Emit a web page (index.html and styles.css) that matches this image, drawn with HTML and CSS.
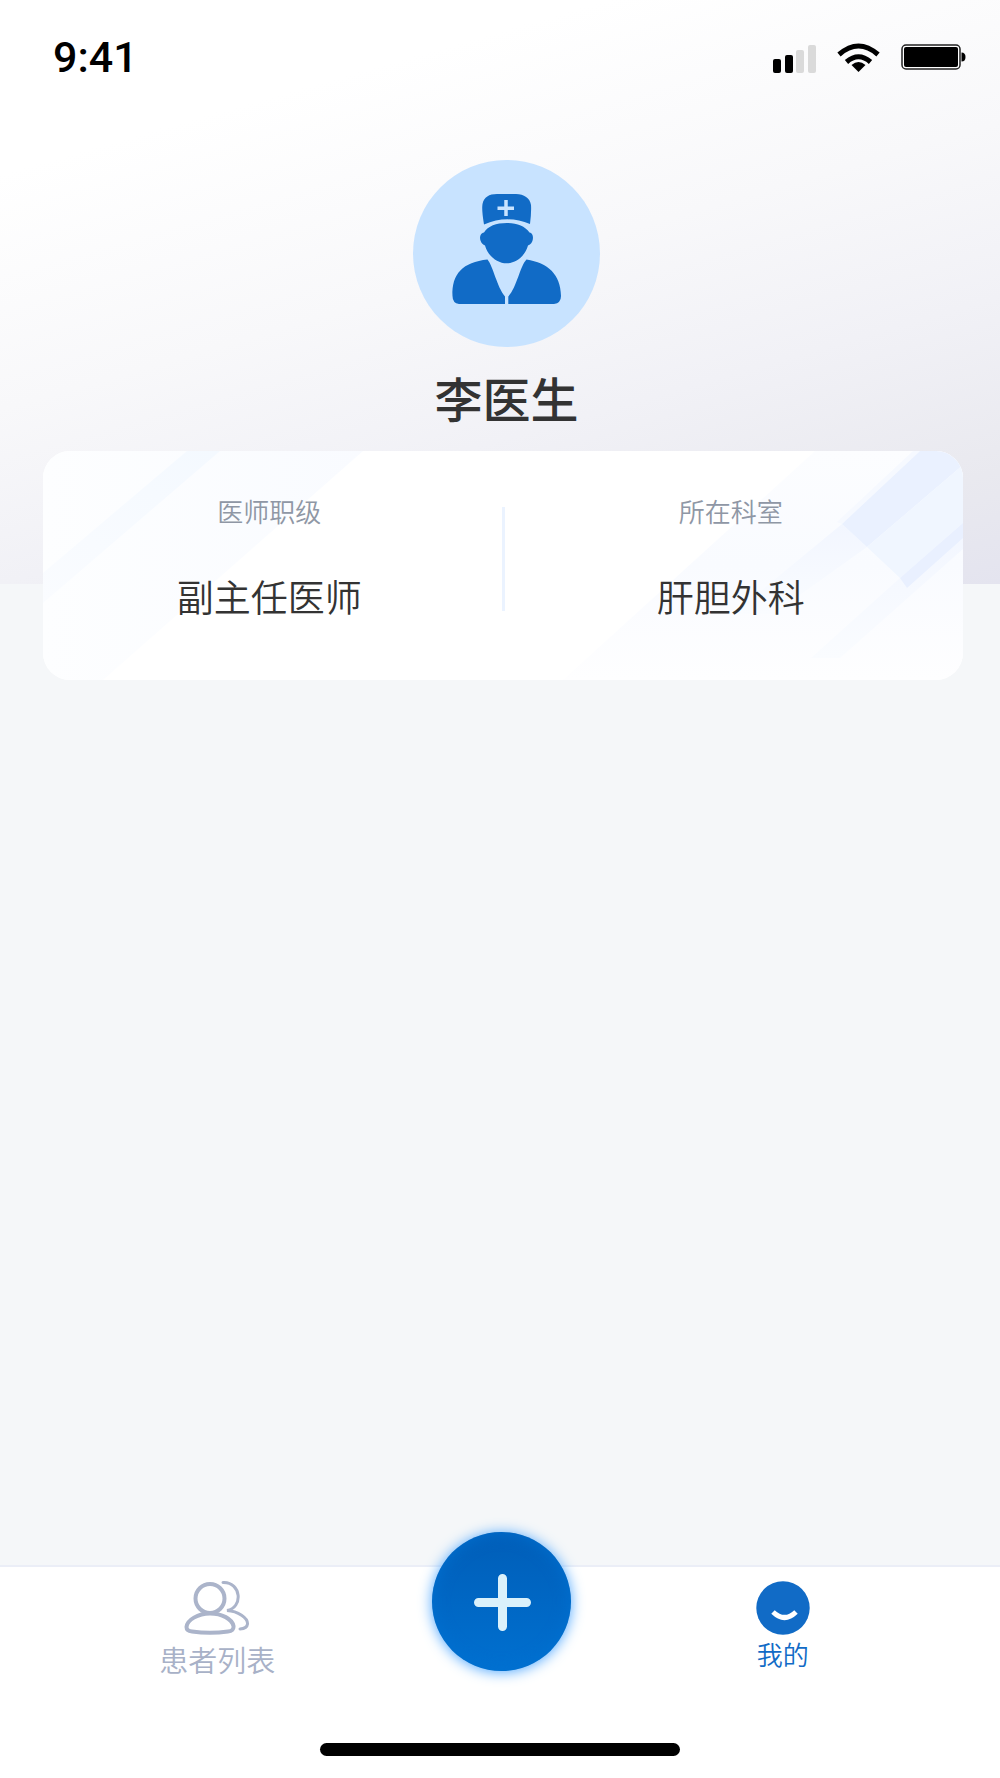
FILE: index.html
```html
<!DOCTYPE html>
<html lang="zh-CN">
  <head>
    <meta charset="utf-8" />
    <meta name="viewport" content="width=device-width, initial-scale=1" />
    <title>我的</title>
    <link rel="stylesheet" href="styles.css">
  </head>
  <body>
    <header class="status-bar">
      <span class="time">9:41</span>
      <div class="status-icons">
        <svg width="44" height="32" viewBox="0 0 44 32">
          <rect x="0" y="16" width="8" height="14" rx="2" />
          <rect x="12" y="12" width="8" height="18" rx="2" />
          <rect x="23" y="7" width="8" height="23" rx="2" fill="#dadada" />
          <rect x="35" y="2" width="8" height="28" rx="2" fill="#dadada" />
        </svg>
        <svg width="44" height="32" viewBox="0 0 44 32">
          <path d="M2 11.500 Q21.500 -5.500 41 11.500" fill="none" stroke="#000" stroke-width="5" />
          <path d="M9.500 19 Q21.500 8.500 33.500 19" fill="none" stroke="#000" stroke-width="5" />
          <path d="M14.500 22 Q21.500 16 28.500 22 L21.500 29Z" />
        </svg>
        <svg width="65" height="32" viewBox="0 0 65 32">
          <rect x="1" y="2" width="58" height="24" rx="4" fill="#fff" stroke="#222" stroke-width="1.500" />
          <rect x="3" y="4" width="54" height="20" rx="2" />
          <path d="M60.500 9.500 Q64.500 9.500 64.500 14 Q64.500 18.500 60.500 18.500Z" />
        </svg>
      </div>
    </header>
    <main>
      <section class="profile">
        <svg class="avatar" viewBox="0 0 187 187">
          <circle cx="93.500" cy="93.500" r="93.500" fill="#c8e3ff" />
          <g fill="#116bc6">
            <path d="M71 64.500 Q68.500 50 69.500 44 C71 37 76 34 84 34 H103 C111 34 117 38 118 45 Q118.500 52 117 64 Q94 54.500 71 64.500Z" />
            <path d="M94 63 C83 63 75 66 71 72.500 C67 73 66.500 78 67.500 80.500 C68.500 83.500 70 84.500 72 85.500 C75 96 84 103.300 93.700 103.300 C103 103.300 112 96 115 85.500 C118 84.500 119 82.500 119.700 80 C120.500 76 119.500 73 116.500 72.500 C112 66 104 63 94 63Z" />
            <path d="M74.500 99.500 C80 106 84 127 92 136.500 V144 H46 Q39.500 143 39.500 136 C38.500 114 50 102 74.500 99.500Z" />
            <path d="M113.500 99.500 C107 106 104 127 95.300 136.500 V144 H141 Q148 143 148 136 C147.500 114 135 103 113.500 99.500Z" />
          </g>
          <path d="M93 40 V56 M84.500 48.200 H101" stroke="#c8e3ff" stroke-width="3.500" />
        </svg>
        <h1>李医生</h1>
      </section>
      <section class="card">
        <svg class="card-pattern" viewBox="0 0 920 229" preserveAspectRatio="none">
          <defs>
            <linearGradient id="left" x1="0" y1="0" x2="1" y2="0">
              <stop offset="0" stop-color="#fdfeff" />
              <stop offset="1" stop-color="#f9fbff" />
            </linearGradient>
            <linearGradient id="stripe" x1="0" y1="1" x2="1" y2="0">
              <stop offset="0" stop-color="#fafcff" />
              <stop offset="1" stop-color="#f4f9ff" />
            </linearGradient>
            <linearGradient id="right" x1="0" y1="0" x2="0" y2="1">
              <stop offset="0" stop-color="#fcfdff" />
              <stop offset="0.500" stop-color="#f9fbff" />
              <stop offset="1" stop-color="#fefeff" />
            </linearGradient>
            <linearGradient id="fade" x1="0" y1="0" x2="0" y2="1">
              <stop offset="0" stop-color="#f2f6ff" />
              <stop offset="1" stop-color="#fafcff" />
            </linearGradient>
          </defs>
          <path d="M0 0 H320 L60 229 H0Z" fill="url(#left)" />
          <path d="M144 0 H177 L0 152 V122Z" fill="url(#stripe)" />
          <path d="M772 0 H920 V229 H520Z" fill="url(#right)" />
          <path d="M799 73 L824 96 L730 163 L690 163Z" fill="url(#fade)" />
          <path d="M857 127 L920 72 V98 L797 207 L768 207Z" fill="url(#fade)" />
          <path d="M870 0 H877 L799 73 L794 71Z" fill="#f6f9ff" />
          <path d="M877 0 H920 V14 L824 96 L799 73Z" fill="#eaf1ff" />
          <path d="M920 14 V72 L857 127 L824 96Z" fill="#f0f6ff" />
          <path d="M920 72 V87 L864 137 L857 127Z" fill="#e9f0ff" />
        </svg>
        <dl class="info">
          <dt>医师职级</dt>
          <dd>副主任医师</dd>
        </dl>
        <div class="divider"></div>
        <dl class="info">
          <dt>所在科室</dt>
          <dd>肝胆外科</dd>
        </dl>
      </section>
    </main>
    <footer>
      <nav class="tabs">
        <a class="tab" href="#patients">
          <svg width="66" height="54" viewBox="0 0 66 54" fill="none" stroke="#abb4ca" stroke-linecap="round">
            <circle cx="26" cy="17.500" r="14.500" stroke-width="4" />
            <path d="M26 32.500 C14 32.500 3 39 2.500 46 Q2.500 50 8 50.500 Q26 53 44 50.500 Q50 50 49.500 45 C48 38 38 32.500 26 32.500Z" stroke-width="4" />
            <path d="M39 1.500 C58 1 59 27 43 29.500 C54 30 64 37 63.500 43 Q63 47.500 56 48" stroke-width="3" />
          </svg>
          <span>患者列表</span>
        </a>
        <button class="add" type="button" aria-label="添加">
          <svg width="57" height="57" viewBox="0 0 57 57">
            <path d="M28.500 4.500 V52.500 M4.500 28.500 H52.500" stroke="#daf1fb" stroke-width="9" stroke-linecap="round" />
          </svg>
        </button>
        <a class="tab active" href="#mine">
          <svg width="54" height="54" viewBox="0 0 54 54">
            <circle cx="27" cy="27" r="26.700" fill="#116bc6" />
            <path d="M17 31 Q28.500 42 40 31" fill="none" stroke="#fff" stroke-width="5" />
          </svg>
          <span>我的</span>
        </a>
      </nav>
      <div class="home-indicator"></div>
    </footer>
  </body>
</html>
```

FILE: styles.css
```css
* {
  box-sizing: border-box;
}
body {
  margin: 0;
  min-height: 100vh;
  display: flex;
  flex-direction: column;
  font-family: "Noto Sans CJK SC", sans-serif;
  color: #333;
  background: linear-gradient(164deg, #fff 20%, #f8f8fa 47%, #f1f1f6 67%, #e9e9ef 87%, #e4e4ef 100%) no-repeat #f5f7f9;
  background-size: 100% 584px;
}
.status-bar {
  display: flex;
  justify-content: space-between;
  align-items: center;
  height: 116px;
  padding: 2px 34px 0 53px;
}
.time {
  padding-bottom: 4px;
  font-family: Roboto, sans-serif;
  font-size: 43px;
  font-weight: 500;
  line-height: 48px;
  color: #000;
}
.status-icons {
  display: flex;
  gap: 20px;
}
main {
  flex: 1;
  padding: 44px 37px 0 43px;
}
.profile {
  display: flex;
  flex-direction: column;
  align-items: center;
  gap: 20px;
  padding-left: 7px;
}
.avatar {
  width: 187px;
  height: 187px;
}
h1 {
  margin: 0;
  font-size: 48px;
  font-weight: 500;
  line-height: 60px;
}
.card {
  position: relative;
  display: flex;
  align-items: center;
  margin-top: 24px;
  padding: 42px 0 60px;
  border-radius: 27px;
  background: #fff;
  overflow: hidden;
}
.card-pattern {
  position: absolute;
  top: 0;
  left: 0;
  width: 100%;
  height: 100%;
}
.info {
  position: relative;
  flex: 1;
  margin: 0;
  padding-right: 6px;
  text-align: center;
}
.info dt {
  font-size: 26px;
  font-weight: 350;
  line-height: 36px;
  color: #8f97a5;
}
.info dd {
  margin: 43px 0 0;
  font-size: 37px;
  font-weight: 350;
  line-height: 48px;
}
.divider {
  position: relative;
  width: 3px;
  height: 104px;
  margin-top: 4px;
  background: #ebf3ff;
}
footer {
  border-top: 2px solid #ebeef7;
  background: #fff;
}
.tabs {
  display: grid;
  grid-template-columns: 1fr 1fr 1fr;
  justify-items: center;
  padding: 0 76px;
}
.tab {
  display: flex;
  flex-direction: column;
  align-items: center;
  padding-top: 14px;
  font-size: 29px;
  font-weight: 350;
  line-height: 48px;
  color: #a8b1c7;
  text-decoration: none;
}
.tab.active {
  font-size: 26px;
  line-height: 38px;
  color: #116bc6;
}
.add {
  display: flex;
  align-items: center;
  justify-content: center;
  width: 139px;
  height: 139px;
  margin-top: -35px;
  margin-left: 3px;
  padding: 2px 0 0 2px;
  border: 0;
  border-radius: 50%;
  background: linear-gradient(#005eb8, #0070d0);
  box-shadow: inset 0 0 16px #0070d0, 0 1px 14px #4da6ff;
  cursor: pointer;
}
.home-indicator {
  width: 36%;
  height: 13px;
  margin: 60px auto 22px;
  border-radius: 7px;
  background: #000;
}
```
